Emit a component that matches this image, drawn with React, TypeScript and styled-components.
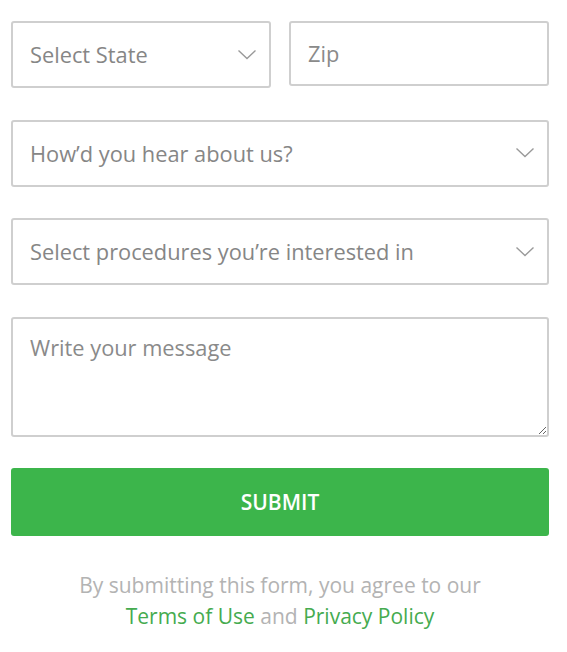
import * as React from 'react';
import styled, { createGlobalStyle } from 'styled-components';

const GlobalStyle = createGlobalStyle`
  html, body {
    margin: 0;
    padding: 0;
    background: #ffffff;
  }
  body {
    font-family: 'Open Sans', 'Noto Sans', sans-serif;
  }
  * {
    box-sizing: border-box;
  }
`;

const Form = styled.form`
  width: 567px;
  padding: 21px 18px 0 11px;
  display: flex;
  flex-direction: column;
  gap: 31.6px;
`;

const Row = styled.div`
  display: grid;
  grid-template-columns: 260px 260px;
  column-gap: 18px;
  align-items: start;
`;

const fieldBase = `
  width: 100%;
  border: 2px solid #cfcfcf;
  border-radius: 3px;
  background: #ffffff;
  font-family: 'Open Sans', 'Noto Sans', sans-serif;
  font-size: 21.8px;
  color: #868686;
  outline: none;
  &::placeholder {
    color: #8a8a8a;
    opacity: 1;
  }
`;

const SelectWrap = styled.div`
  position: relative;
  svg {
    position: absolute;
    right: 14px;
    top: 50%;
    transform: translateY(-50%);
    pointer-events: none;
  }
`;

const Select = styled.select`
  ${fieldBase}
  height: 67px;
  padding: 0 50px 0 17px;
  appearance: none;
  -webkit-appearance: none;
`;

const Input = styled.input<{ $height?: number }>`
  ${fieldBase}
  height: ${(p) => p.$height ?? 67}px;
  padding: 0 17px;
`;

const TextArea = styled.textarea`
  ${fieldBase}
  height: 120px;
  padding: 14px 17px;
  resize: vertical;
  display: block;
`;

const SubmitButton = styled.button`
  height: 68px;
  width: 100%;
  border: none;
  border-radius: 3px;
  background: #3cb54b;
  color: #ffffff;
  font-family: 'Open Sans', 'Noto Sans', sans-serif;
  font-size: 21px;
  font-weight: 600;
  cursor: pointer;
`;

const Disclaimer = styled.p`
  margin: 0;
  margin-top: 2px;
  text-align: center;
  font-size: 21px;
  line-height: 31px;
  color: #b3b3b3;
  a {
    color: #45ab4f;
    text-decoration: none;
  }
`;

const Chevron = () => (
  <svg width="20" height="12" viewBox="0 0 20 12" fill="none">
    <path d="M1.5 1.5 L10 9.5 L18.5 1.5" stroke="#9a9a9a" strokeWidth="1.4" />
  </svg>
);

interface DropdownProps {
  placeholder: string;
  options?: string[];
}

const Dropdown: React.FC<DropdownProps> = ({ placeholder, options = [] }) => (
  <SelectWrap>
    <Select defaultValue="">
      <option value="" disabled>{placeholder}</option>
      {options.map((o) => <option key={o}>{o}</option>)}
    </Select>
    <Chevron />
  </SelectWrap>
);

const App: React.FC = () => {
  return (
    <>
      <GlobalStyle />
      <Form onSubmit={(e) => e.preventDefault()}>
        <Row>
          <Dropdown placeholder="Select State" options={['California', 'New York', 'Texas']} />
          <Input placeholder="Zip" $height={65} />
        </Row>
        <Dropdown placeholder="How’d you hear about us?" options={['Google', 'Friend', 'Social media']} />
        <Dropdown placeholder="Select procedures you’re interested in" options={['Consultation', 'Treatment']} />
        <TextArea placeholder="Write your message" />
        <SubmitButton type="submit">SUBMIT</SubmitButton>
        <Disclaimer>
          By submitting this form, you agree to our
          <br />
          <a href="#">Terms of Use</a> and <a href="#">Privacy Policy</a>
        </Disclaimer>
      </Form>
    </>
  );
};

export default App;
